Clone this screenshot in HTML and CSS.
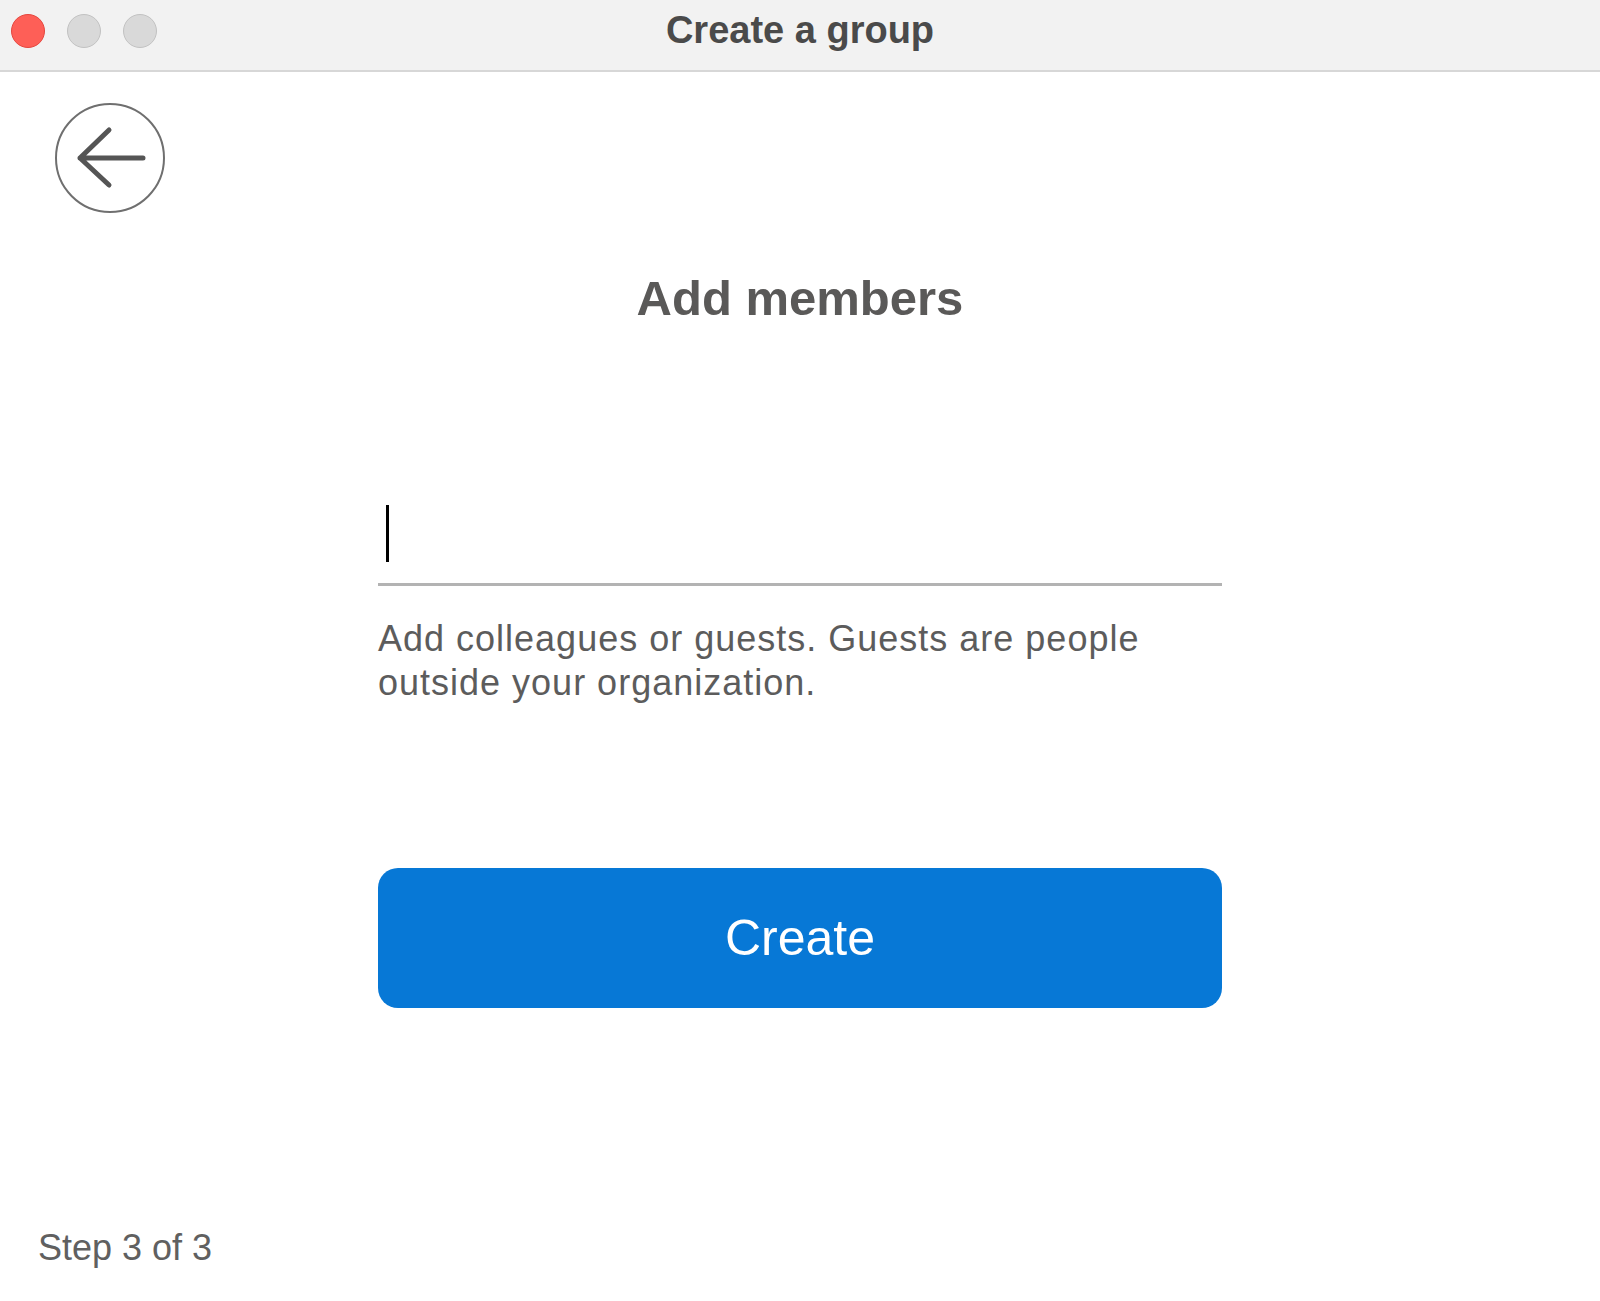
FILE: index.html
```html
<!DOCTYPE html>
<html lang="en">
<head>
    <meta charset="UTF-8">
    <meta name="viewport" content="width=device-width, initial-scale=1.0">
    <title>Create a group</title>
    <link rel="stylesheet" href="styles.css">
</head>
<body>
    <div class="window">
        <!-- Title bar -->
        <div class="titlebar">
            <div class="lights">
                <span class="light close"></span>
                <span class="light"></span>
                <span class="light"></span>
            </div>
            <div class="title">Create a group</div>
            <div></div>
        </div>

        <div class="content">
            <button type="button" class="back-button" aria-label="Back">
                <svg width="106" height="106" viewBox="0 0 106 106">
                    <path d="M23 53 H86 M52 25 L23 53 L52 80" fill="none" stroke="#555" stroke-width="5" stroke-linecap="round" stroke-linejoin="round"/>
                </svg>
            </button>

            <h1>Add members</h1>

            <div class="form">
                <div class="field">
                    <span class="caret"></span>
                </div>
                <p class="hint">Add colleagues or guests. Guests are people outside your organization.</p>
                <button type="button" class="create-button">Create</button>
            </div>
        </div>

        <div class="footer">Step 3 of 3</div>
    </div>
</body>
</html>
```

FILE: styles.css
```css
body {
    font-family: "Liberation Sans", Arial, sans-serif;
    background-color: #fff;
    margin: 0;
}

.window {
    display: flex;
    flex-direction: column;
    min-height: 100vh;
}

.titlebar {
    display: grid;
    grid-template-columns: 1fr auto 1fr;
    height: 70px;
    background-color: #f2f2f2;
    border-bottom: 2px solid #d7d7d7;
}

.lights {
    display: flex;
    gap: 22px;
    padding: 14px 0 0 11px;
}

.light {
    width: 32px;
    height: 32px;
    border-radius: 50%;
    background-color: #d9d9d9;
    border: 1px solid #c2c2c2;
}

.light.close {
    background-color: #fe5f57;
    border-color: #e5473f;
}

.title {
    padding-top: 9px;
    font-size: 38px;
    line-height: 42px;
    font-weight: bold;
    color: #4a4a4a;
}

.content {
    display: flex;
    flex-direction: column;
}

.back-button {
    width: 110px;
    height: 110px;
    margin: 31px 0 0 55px;
    padding: 0;
    border: 2px solid #6f6f6f;
    border-radius: 50%;
    background: #fff;
    display: flex;
    align-items: center;
    justify-content: center;
    cursor: pointer;
}

h1 {
    margin: 61px 0 0;
    text-align: center;
    font-size: 49px;
    line-height: 49px;
    font-weight: bold;
    color: #5a5958;
}

.form {
    width: 844px;
    margin: 0 auto;
}

.field {
    margin-top: 182px;
    padding: 0 0 21px 8px;
    border-bottom: 3px solid #b3b3b3;
}

.caret {
    display: block;
    width: 3px;
    height: 57px;
    background-color: #000;
}

.hint {
    margin: 31px 0 0;
    font-size: 36px;
    line-height: 44px;
    letter-spacing: 1px;
    color: #5c5c5c;
}

.create-button {
    display: block;
    width: 100%;
    height: 140px;
    margin-top: 163px;
    border: none;
    border-radius: 20px;
    background-color: #0778d6;
    color: #fff;
    font-family: "Liberation Sans", Arial, sans-serif;
    font-size: 50px;
    cursor: pointer;
}

.footer {
    margin-top: auto;
    padding: 0 0 33px 38px;
    font-size: 36px;
    line-height: 41px;
    color: #606060;
}
```
